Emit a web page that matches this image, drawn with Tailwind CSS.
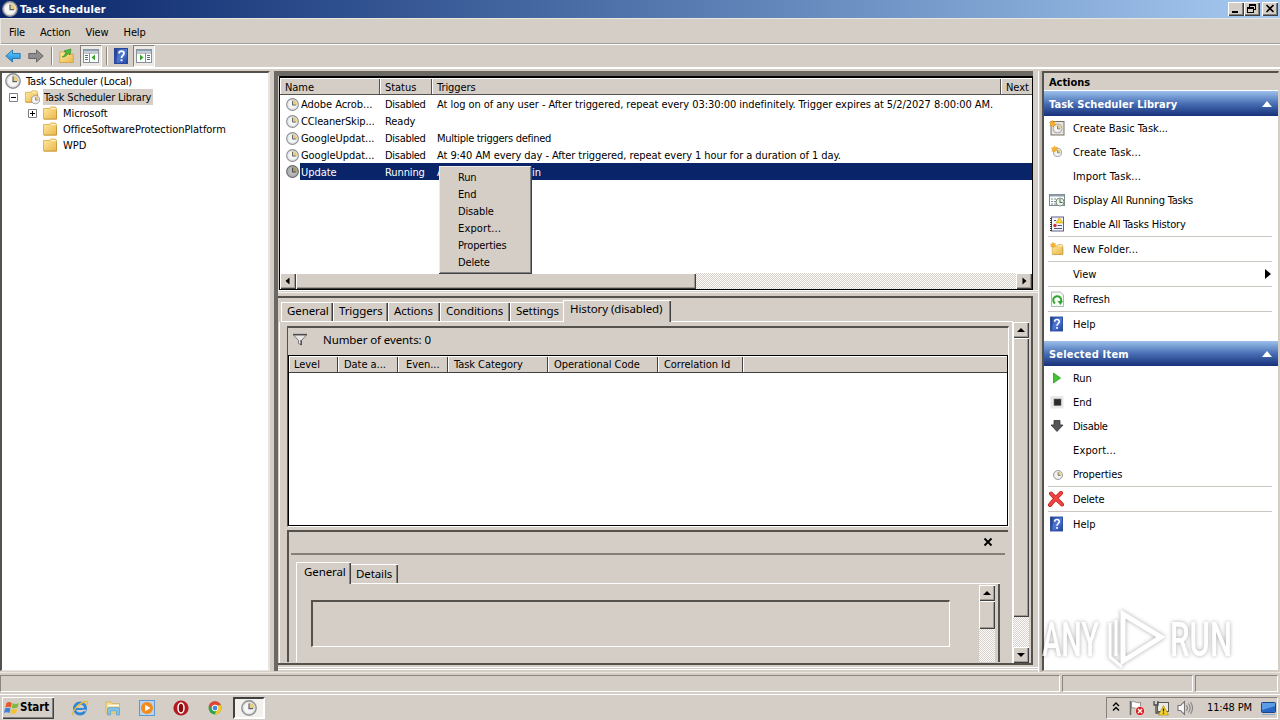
<!DOCTYPE html>
<html lang="en">

<head>
    <meta charset="UTF-8">
    <meta name="viewport" content="width=device-width, initial-scale=1.0">
    <title>Task Scheduler</title>
    <script src="https://cdn.jsdelivr.net/npm/@tailwindcss/browser@4"></script>
</head>

<body class="w-[1280px] h-[720px] overflow-hidden relative flex flex-col bg-[#d5cec7] text-black text-[11px] tracking-[-0.05px] font-['DejaVu_Sans_Condensed','DejaVu_Sans',sans-serif] whitespace-nowrap">

    <!-- icon set -->
    <svg width="0" height="0" class="absolute">
        <defs>
            <linearGradient id="gFolder" x1="0" y1="0" x2="1" y2="1">
                <stop offset="0" stop-color="#ffe9a0" />
                <stop offset="1" stop-color="#e9b84a" />
            </linearGradient>
            <linearGradient id="gBlue" x1="0" y1="0" x2="0" y2="1">
                <stop offset="0" stop-color="#6fd0fa" />
                <stop offset="1" stop-color="#1583d0" />
            </linearGradient>
            <linearGradient id="gHelp" x1="0" y1="0" x2="1" y2="1">
                <stop offset="0" stop-color="#2b4a9c" />
                <stop offset=".5" stop-color="#4f7ad6" />
                <stop offset="1" stop-color="#1f3f9b" />
            </linearGradient>
        </defs>
        <symbol id="clock" viewBox="0 0 16 16">
            <circle cx="8" cy="8" r="7.2" fill="#e9eaec" stroke="#8e8f92" stroke-width="1.400" />
            <circle cx="8" cy="8" r="5.600" fill="#f6f6f4" stroke="#cfd4da" stroke-width=".6" />
            <path d="M8 8.500V2.500A5.500 5.500 0 0 1 13.500 8.500z" fill="#e8cd80" />
            <path d="M8 3.500V8.700H12" fill="none" stroke="#5c6470" stroke-width="1.200" />
        </symbol>
        <symbol id="folder" viewBox="0 0 16 16">
            <path d="M1.500 3.500h6l1-1.500h5l1 1.500v10.500h-13z" fill="url(#gFolder)" stroke="#d9a842" stroke-width=".8" />
            <path d="M9 3.500h4.500" stroke="#fff6d0" stroke-width="1.200" />
            <path d="M2 14.200h12.500v-9" fill="none" stroke="#c48f30" stroke-width=".7" />
        </symbol>
        <symbol id="help" viewBox="0 0 14 16">
            <rect x=".5" y=".5" width="13" height="15" fill="url(#gHelp)" stroke="#29479a" />
            <path d="M2 1v14" stroke="#1c3580" />
            <path d="M5 5.500c0-3.200 5-3.200 5 0 0 2-2.500 2-2.500 4.500" fill="none" stroke="#fff" stroke-width="1.700" />
            <rect x="6.600" y="11.300" width="1.900" height="1.900" fill="#fff" />
        </symbol>
        <symbol id="arrow" viewBox="0 0 16 14">
            <path d="M.8 7L7.500 1v3.500h7.700v5H7.500V13z" />
        </symbol>
        <symbol id="star" viewBox="0 0 10 10">
            <path d="M5 0l1.200 3L9.500 2 8 5l2 2.500-3.200-.2L5.500 10 4 7.500 1 8.500 2.300 5.500 0 3.500l3.300-.3z" fill="#f7b02c" stroke="#dd8e15" stroke-width=".4" />
        </symbol>
    </svg>

    <!-- title bar -->
    <div class="h-[18px] shrink-0 flex items-center pl-[2px] pr-[2px] bg-linear-to-r from-[#0a246a] to-[#a6caf0] text-white">
        <svg class="size-4"><use href="#clock" /></svg>
        <span class="ml-[2px] pt-[2px] font-bold tracking-[0.15px]">Task Scheduler</span>
        <div class="ml-auto flex">
            <div class="w-4 h-[14px] bg-[#d5cec7] shadow-[inset_1px_1px_#fff,inset_-1px_-1px_#404040,inset_-2px_-2px_#808080]">
                <div class="w-[6px] h-[2px] bg-black translate-x-1 translate-y-[9px]"></div>
            </div>
            <div class="w-4 h-[14px] bg-[#d5cec7] shadow-[inset_1px_1px_#fff,inset_-1px_-1px_#404040,inset_-2px_-2px_#808080]">
                <svg class="w-4 h-[14px]" fill="none" stroke="#000" shape-rendering="crispEdges">
                    <path d="M5.500 5V2.500h6v5H10M5 3h7M3.500 5.500h6v5h-6zM3 6h7" />
                </svg>
            </div>
            <div class="ml-[2px] w-4 h-[14px] bg-[#d5cec7] shadow-[inset_1px_1px_#fff,inset_-1px_-1px_#404040,inset_-2px_-2px_#808080]">
                <svg class="w-4 h-[14px]" stroke="#000" stroke-width="1.600"><path d="M4.500 3l7 7M11.500 3l-7 7" /></svg>
            </div>
        </div>
    </div>

    <!-- menu bar -->
    <div class="h-[26px] shrink-0 flex items-center pl-[8px] pt-[4px] gap-[15px] tracking-[-0.1px] border-l border-t border-[#e9e5df] shadow-[inset_0_-1px_#a39e97]">
        <span>File</span><span>Action</span><span>View</span><span>Help</span>
    </div>

    <!-- tool bar -->
    <div class="h-[25px] shrink-0 flex items-center border-t border-white border-b-2 pl-[5px]">
        <svg class="w-4 h-[14px]" fill="url(#gBlue)" stroke="#1b78b8" stroke-width=".9"><use href="#arrow" /></svg>
        <svg class="w-4 h-[14px] ml-[7px] -scale-x-100" fill="#8e8e8e" stroke="#5c5c5c" stroke-width=".9"><use href="#arrow" /></svg>
        <div class="w-[2px] h-[18px] ml-[7px] border-l border-[#8a857e] bg-white"></div>
        <svg class="size-4 ml-[6px]">
            <path d="M.8 4h5l1 2h7.500v8.500H.8z" fill="url(#gFolder)" stroke="#d4a03c" stroke-width=".8" />
            <path d="M3 9c2-1 3.500-2.500 4-5L5 3l7-2-1 6-1.700-1.700C8 7.500 6 9 3 9z" fill="#4dbb35" stroke="#238a1e" stroke-width=".6" />
        </svg>
        <div class="ml-[5px] w-[22px] h-[22px] bg-[#ece9e5] border border-[#85807a] border-r-white border-b-white flex items-center justify-center">
            <svg class="w-4 h-[14px]">
                <rect x=".5" y=".5" width="15" height="13" fill="#fff" stroke="#87919c" />
                <path d="M1 1.500h14" stroke="#8ca0b5" stroke-width="2" />
                <path d="M1 4h14M6.500 4v9" stroke="#87919c" />
                <path d="M2 6.500h3M2 8.500h3M2 10.500h3" stroke="#4d6e93" />
                <path d="M12 5.500v6L8.500 8.500z" fill="#35a52a" />
            </svg>
        </div>
        <div class="w-[2px] h-[18px] ml-[4px] border-l border-[#8a857e] bg-white"></div>
        <svg class="w-[14px] h-4 ml-[6px]"><use href="#help" /></svg>
        <div class="ml-[5px] w-[22px] h-[22px] bg-[#ece9e5] border border-[#85807a] border-r-white border-b-white flex items-center justify-center">
            <svg class="w-4 h-[14px]">
                <rect x=".5" y=".5" width="15" height="13" fill="#fff" stroke="#87919c" />
                <path d="M1 1.500h14" stroke="#8ca0b5" stroke-width="2" />
                <path d="M1 4h14M9.500 4v9" stroke="#87919c" />
                <path d="M11 6.500h3M11 8.500h3M11 10.500h3" stroke="#4d6e93" />
                <path d="M4 5.500v6l3.500-3z" fill="#35a52a" />
            </svg>
        </div>
    </div>

    <!-- panes -->
    <div class="h-[603px] shrink-0 flex pt-[2px]">

        <!-- tree -->
        <div class="w-[270px] h-[600px] bg-white border-t-2 border-l-2 border-[#55514d] border-r-2 border-r-[#e8e5e0] border-b border-b-[#e8e5e0] [&_span]:pt-[2px]">
            <div class="flex items-center h-4 pl-[3px]">
                <svg class="size-4"><use href="#clock" /></svg>
                <span class="ml-[5px] tracking-[-0.2px]">Task Scheduler (Local)</span>
            </div>
            <div class="flex items-center h-4 pl-[7px]">
                <svg class="size-[9px]"><path d="M.5.5h8v8h-8z" fill="#fff" stroke="#808080" /><path d="M2 4.500h5" stroke="#000" /></svg>
                <svg class="size-4 ml-[6px]"><use href="#folder" width="15" height="15" /><use href="#clock" x="7" y="6" width="9" height="9.500" /></svg>
                <div class="ml-[3px] h-4 pl-px pr-[2px] leading-[17px] bg-[#d5cec7] tracking-[-0.2px]">Task Scheduler Library</div>
            </div>
            <div class="flex items-center h-4 pl-[26px]">
                <svg class="size-[9px]"><path d="M.5.5h8v8h-8z" fill="#fff" stroke="#808080" /><path d="M2 4.500h5M4.500 2v5" stroke="#000" /></svg>
                <svg class="size-4 ml-[5px]"><use href="#folder" /></svg>
                <span class="ml-[5px]">Microsoft</span>
            </div>
            <div class="flex items-center h-4 pl-[40px]">
                <svg class="size-4"><use href="#folder" /></svg>
                <span class="ml-[5px]">OfficeSoftwareProtectionPlatform</span>
            </div>
            <div class="flex items-center h-4 pl-[40px]">
                <svg class="size-4"><use href="#folder" /></svg>
                <span class="ml-[5px]">WPD</span>
            </div>
        </div>

        <!-- middle column -->
        <div class="ml-[4px] w-[764px] h-[600px] flex flex-col border-l-[4px] border-[#6c6863]">

            <!-- task list -->
            <div class="h-[219px] w-[755px] border-t-[5px] border-[#6c6863] pl-px">
                <div class="h-[214px] border border-black border-t-2 border-r-[1.500px] bg-white flex flex-col overflow-hidden [&_span]:pt-[2px]">
                    <div class="h-[17px] shrink-0 flex bg-[#d5cec7] leading-[19px] border-b border-[#55514d]">
                        <div class="w-[100px] pl-[5px] shadow-[inset_1px_1px_#fff,inset_-1px_0_#55514d]">Name</div>
                        <div class="w-[52px] pl-[5px] shadow-[inset_1px_1px_#fff,inset_-1px_0_#55514d]">Status</div>
                        <div class="w-[569px] pl-[5px] shadow-[inset_1px_1px_#fff,inset_-1px_0_#55514d]">Triggers</div>
                        <div class="grow pl-[5px] shadow-[inset_1px_1px_#fff]">Next</div>
                    </div>
                    <div class="h-[17px] shrink-0 flex items-center pl-[6px] pt-px">
                        <svg class="size-[13px]"><use href="#clock" /></svg>
                        <span class="ml-[2px] w-[84px]">Adobe Acrob...</span><span class="w-[52px] tracking-[-0.3px]">Disabled</span>
                        <span>At log on of any user - After triggered, repeat every 03:30:00 indefinitely. Trigger expires at 5/2/2027 8:00:00 AM.</span>
                    </div>
                    <div class="h-[17px] shrink-0 flex items-center pl-[6px] pt-px">
                        <svg class="size-[13px]"><use href="#clock" /></svg>
                        <span class="ml-[2px] w-[84px] tracking-[-0.15px]">CCleanerSkip...</span><span class="w-[52px]">Ready</span>
                    </div>
                    <div class="h-[17px] shrink-0 flex items-center pl-[6px] pt-px">
                        <svg class="size-[13px]"><use href="#clock" /></svg>
                        <span class="ml-[2px] w-[84px]">GoogleUpdat...</span><span class="w-[52px] tracking-[-0.3px]">Disabled</span>
                        <span class="tracking-[-0.3px]">Multiple triggers defined</span>
                    </div>
                    <div class="h-[17px] shrink-0 flex items-center pl-[6px] pt-px">
                        <svg class="size-[13px]"><use href="#clock" /></svg>
                        <span class="ml-[2px] w-[84px]">GoogleUpdat...</span><span class="w-[52px] tracking-[-0.3px]">Disabled</span>
                        <span class="tracking-[-0.07px]">At 9:40 AM every day - After triggered, repeat every 1 hour for a duration of 1 day.</span>
                    </div>
                    <div class="h-[17px] shrink-0 flex items-center pl-[6px]">
                        <svg class="size-[13px] brightness-75"><use href="#clock" /></svg>
                        <div class="ml-px pl-px pt-px grow h-[17px] flex items-center bg-[#0a246a] text-white">
                            <span class="w-[84px]">Update</span><span class="w-[52px] tracking-[-0.1px]">Running</span>
                            <span class="w-[104px] flex justify-between"><b class="font-normal">At log on of</b><b class="font-normal">admin</b></span>
                        </div>
                    </div>
                    <div class="mt-auto h-4 shrink-0 flex bg-[repeating-conic-gradient(#fff_0_25%,#d5cec7_0_50%)] bg-[length:2px_2px]">
                        <div class="w-4 bg-[#d5cec7] shadow-[inset_1px_1px_#fff,inset_-1px_-1px_#404040,inset_-2px_-2px_#a09a93]">
                            <svg class="size-4"><path d="M9.500 4.500v7L5.500 8z" /></svg>
                        </div>
                        <div class="w-[400px] bg-[#d5cec7] shadow-[inset_1px_1px_#fff,inset_-1px_-1px_#404040,inset_-2px_-2px_#a09a93]"></div>
                        <div class="ml-auto w-4 bg-[#d5cec7] shadow-[inset_1px_1px_#fff,inset_-1px_-1px_#404040,inset_-2px_-2px_#a09a93]">
                            <svg class="size-4"><path d="M6.500 4.500v7l4-3.500z" /></svg>
                        </div>
                    </div>
                </div>
            </div>

            <!-- task details -->
            <div class="h-[2px] border-t border-white"></div>
            <div class="h-[2px] border-t border-[#f4f2ef]"></div>
            <div class="mt-[2px] w-[755px] h-[369px] border-t-2 border-r-2 border-b-2 border-[#55514d] pl-px flex">
                <div class="w-[734px] flex flex-col pt-[2px] font-['Noto_Sans','Open_Sans',sans-serif] text-[11.5px] tracking-[-0.1px]">
                    <div class="h-[22px] pl-[2px] flex items-end leading-[16px]">
                        <div class="w-[52px] h-5 pl-[5px] border-t border-l border-b border-white shadow-[inset_-1px_0_#404040,inset_-2px_0_#8a857e]">General</div>
                        <div class="w-[55px] h-5 pl-[5px] border-t border-l border-b border-white shadow-[inset_-1px_0_#404040,inset_-2px_0_#8a857e]">Triggers</div>
                        <div class="w-[52px] h-5 pl-[5px] border-t border-l border-b border-white shadow-[inset_-1px_0_#404040,inset_-2px_0_#8a857e]">Actions</div>
                        <div class="w-[70px] h-5 pl-[5px] border-t border-l border-b border-white shadow-[inset_-1px_0_#404040,inset_-2px_0_#8a857e]">Conditions</div>
                        <div class="w-[53px] h-5 pl-[5px] border-t border-l border-b border-white">Settings</div>
                        <div class="w-[108px] h-[22px] pl-[6px] border-t border-l border-white shadow-[inset_-1px_0_#404040,inset_-2px_0_#8a857e]">History (disabled)</div>
                        <div class="w-[342px] h-px bg-white"></div>
                    </div>
                    <div class="h-[341px] border-l border-r border-white pl-[7px] pt-[4px] flex flex-col">
                        <!-- events -->
                        <div class="w-[722px] h-[201px] border-l border-t-2 border-[#55514d] border-r border-r-white border-b border-b-white">
                            <div class="h-[27px] flex items-center pl-[4px]">
                                <svg class="size-4 -mt-1"><path d="M1.500 3h13L9.500 8.500V13l-3-1.500v-3z" fill="#e6e6e4" stroke="#77777a" /><path d="M1 2.500h14" stroke="#4c4c4c" stroke-width="1.300" /><path d="M9 8v5" stroke="#333" /></svg>
                                <span class="ml-[15px] -mt-[3px]">Number of events: 0</span>
                            </div>
                            <div class="h-[171px] w-[720px] border border-black bg-white text-[11px] tracking-[-0.05px] font-['DejaVu_Sans_Condensed','DejaVu_Sans',sans-serif]">
                                <div class="h-[17px] flex bg-[#d5cec7] leading-[18px] border-b border-[#404040]">
                                    <div class="w-[49px] pl-[5px] shadow-[inset_1px_1px_#fff,inset_-1px_0_#404040]">Level</div>
                                    <div class="w-[60px] pl-[6px] shadow-[inset_1px_1px_#fff,inset_-1px_0_#404040]">Date a...</div>
                                    <div class="w-[50px] pl-[8px] shadow-[inset_1px_1px_#fff,inset_-1px_0_#404040]">Even...</div>
                                    <div class="w-[100px] pl-[6px] shadow-[inset_1px_1px_#fff,inset_-1px_0_#404040]">Task Category</div>
                                    <div class="w-[110px] pl-[6px] shadow-[inset_1px_1px_#fff,inset_-1px_0_#404040]">Operational Code</div>
                                    <div class="w-[85px] pl-[6px] shadow-[inset_1px_1px_#fff,inset_-1px_0_#404040]">Correlation Id</div>
                                    <div class="grow shadow-[inset_1px_1px_#fff]"></div>
                                </div>
                            </div>
                        </div>
                        <!-- event preview -->
                        <div class="mt-[3px] w-[721px] h-[132px] border-l-2 border-t-2 border-[#55514d] flex flex-col">
                            <div class="ml-[2px] w-[714px] h-[23px] border-b-2 border-[#85807a] flex items-center">
                                <svg class="size-[10px] ml-[692px] -mt-px" stroke="#000" stroke-width="1.800"><path d="M1.500 1.500l7 7M8.500 1.500l-7 7" /></svg>
                            </div>
                            <div class="mt-[7px] ml-[7px] w-[704px] flex items-end h-[22px] leading-[18px]">
                                <div class="w-[55px] h-[22px] pl-[7px] border-l border-t border-white shadow-[inset_-1px_0_#404040,inset_-2px_0_#8a857e]">General</div>
                                <div class="w-[47px] h-5 pl-[5px] border-t border-b border-white shadow-[inset_-1px_0_#404040,inset_-2px_0_#8a857e]">Details</div>
                                <div class="grow h-px bg-white"></div>
                            </div>
                            <div class="ml-[7px] w-[704px] grow border-l border-l-white border-r-2 border-r-[#55514d] flex">
                                <div class="mt-[16px] ml-[14px] w-[639px] h-[47px] border-l-2 border-t-2 border-[#55514d] border-r border-r-white border-b border-b-white"></div>
                                <div class="ml-auto mr-[3px] mt-px w-4 bg-[repeating-conic-gradient(#fff_0_25%,#d5cec7_0_50%)] bg-[length:2px_2px]">
                                    <div class="size-4 bg-[#d5cec7] shadow-[inset_1px_1px_#fff,inset_-1px_-1px_#404040,inset_-2px_-2px_#a09a93]">
                                        <svg class="size-4"><path d="M4 10h8L8 6z" /></svg>
                                    </div>
                                    <div class="h-[28px] bg-[#d5cec7] shadow-[inset_1px_1px_#fff,inset_-1px_-1px_#404040,inset_-2px_-2px_#a09a93]"></div>
                                </div>
                            </div>
                        </div>
                    </div>
                </div>
                <!-- vertical scroll bar -->
                <div class="mt-[24px] w-4 h-[341px] bg-[repeating-conic-gradient(#fff_0_25%,#d5cec7_0_50%)] bg-[length:2px_2px] flex flex-col">
                    <div class="h-4 bg-[#d5cec7] shadow-[inset_1px_1px_#fff,inset_-1px_-1px_#404040,inset_-2px_-2px_#a09a93]">
                        <svg class="size-4"><path d="M4 10h8L8 6z" /></svg>
                    </div>
                    <div class="h-[279px] bg-[#d5cec7] shadow-[inset_1px_1px_#fff,inset_-1px_-1px_#404040,inset_-2px_-2px_#a09a93]"></div>
                    <div class="mt-auto h-4 bg-[#d5cec7] shadow-[inset_1px_1px_#fff,inset_-1px_-1px_#404040,inset_-2px_-2px_#a09a93]">
                        <svg class="size-4"><path d="M4 6h8l-4 4z" /></svg>
                    </div>
                </div>
            </div>
            <div class="mt-[2px] h-[2px] border-t border-white"></div>
            <div class="h-[2px] border-t border-white"></div>
        </div>

        <!-- actions pane -->
        <div class="w-[4px] bg-[#d5cec7] border-r-2 border-[#bdb8b1] shadow-[inset_1px_0_#fff]"></div>
        <div class="w-[237px] h-[600px] bg-white border-l-2 border-t-2 border-[#55514d] border-r border-r-[#d5cec7] border-b border-b-[#d5cec7] [&_span]:pt-[2px]">
            <div class="h-[18px] pl-[5px] leading-[19px] bg-[#d5cec7] border-b border-white font-bold">Actions</div>
            <div class="h-[25px] pl-[5px] pr-[6px] flex items-center justify-between bg-linear-to-b from-[#9cc0ea] via-[#4a6fb5] to-[#17317b] text-white font-bold tracking-[0.06px]">
                <span class="mt-[2px]">Task Scheduler Library</span>
                <svg class="w-[10px] h-[6px]" fill="#fff"><path d="M0 6L5 0l5 6z" /></svg>
            </div>
            <div class="h-6 flex items-center pl-[5px]">
                <svg class="size-4"><rect x="2" y="1.500" width="13" height="13.500" fill="#e9e4da" stroke="#77716a" /><use href="#clock" x="3.500" y="3.500" width="10" height="10" /><use href="#star" width="7" height="7" /></svg>
                <span class="ml-[8px]">Create Basic Task...</span>
            </div>
            <div class="h-6 flex items-center pl-[5px]">
                <svg class="size-4"><use href="#clock" x="4" y="4" width="9" height="9" /><use href="#star" x="2" y="1.500" width="7" height="7" /></svg>
                <span class="ml-[8px] tracking-[0.1px]">Create Task...</span>
            </div>
            <div class="h-6 flex items-center pl-[29px]"><span class="tracking-[0.1px]">Import Task...</span></div>
            <div class="h-6 flex items-center pl-[5px]">
                <svg class="size-4"><rect x=".5" y="2.500" width="15" height="11" fill="#fff" stroke="#7c8a90" /><path d="M1 3.500h14" stroke="#8e9da8" stroke-width="2" /><path d="M2 7h5M2 9.500h5M2 12h5" stroke="#6c8a8c" stroke-dasharray="2 1" /><circle cx="11" cy="10" r="4" fill="#eef4ea" stroke="#7c8a80" /><path d="M11 7v3.500h2.500" fill="none" stroke="#3a6a50" /></svg>
                <span class="ml-[8px] tracking-[-0.2px]">Display All Running Tasks</span>
            </div>
            <div class="h-6 flex items-center pl-[5px]">
                <svg class="size-4"><rect x="2.500" y="1" width="12" height="14" fill="#f4f4fa" stroke="#5d6288" /><path d="M2 2v13" stroke="#333" stroke-width="2" stroke-dasharray="1 1" /><path d="M10.500 1.500L14 7H7z" fill="#f9d62c" stroke="#c9a010" stroke-width=".6" /><circle cx="6" cy="9.500" r="1.700" fill="#d03030" /><path d="M8.500 9.500H13M5 12.500h8M5 4.500h2" stroke="#50558a" /></svg>
                <span class="ml-[8px] tracking-[-0.18px]">Enable All Tasks History</span>
            </div>
            <div class="ml-[4px] w-[224px] h-px bg-[#cac6bf]"></div>
            <div class="h-6 flex items-center pl-[5px]">
                <svg class="size-4"><use href="#folder" x="1" y="2" width="15" height="13" /><use href="#star" x="1" y="1" width="6" height="6" /></svg>
                <span class="ml-[8px] tracking-[0.12px]">New Folder...</span>
            </div>
            <div class="ml-[4px] w-[224px] h-px bg-[#cac6bf]"></div>
            <div class="h-6 flex items-center justify-between pl-[29px] pr-[7px]">
                <span>View</span>
                <svg class="w-[6px] h-[10px]"><path d="M0 0l6 5-6 5z" /></svg>
            </div>
            <div class="ml-[4px] w-[224px] h-px bg-[#cac6bf]"></div>
            <div class="h-6 flex items-center pl-[5px]">
                <svg class="size-4"><path d="M2.500 1h9l3 3v11.500h-12z" fill="#f6fbf4" stroke="#9aa69a" stroke-width=".8" /><path d="M6 12.500A4 4 0 1 1 11.500 11.500" fill="none" stroke="#36a536" stroke-width="2" /><path d="M8.500 10h5.500l-2.500 4z" fill="#36a536" /></svg>
                <span class="ml-[8px]">Refresh</span>
            </div>
            <div class="ml-[4px] w-[224px] h-px bg-[#cac6bf]"></div>
            <div class="h-6 flex items-center pl-[6px]">
                <svg class="w-[13px] h-4"><use href="#help" /></svg>
                <span class="ml-[10px]">Help</span>
            </div>
            <div class="mt-[5px] h-[25px] pl-[5px] pr-[6px] flex items-center justify-between bg-linear-to-b from-[#9cc0ea] via-[#4a6fb5] to-[#17317b] text-white font-bold tracking-[0.2px]">
                <span class="mt-[2px]">Selected Item</span>
                <svg class="w-[10px] h-[6px]" fill="#fff"><path d="M0 6L5 0l5 6z" /></svg>
            </div>
            <div class="h-6 flex items-center pl-[5px]">
                <svg class="size-4"><path d="M4.500 3v10l7-5z" fill="#45c433" stroke="#2c9a20" stroke-width=".8" /></svg>
                <span class="ml-[8px]">Run</span>
            </div>
            <div class="h-6 flex items-center pl-[5px]">
                <svg class="size-4"><rect x="1.500" y="2" width="13" height="12.500" fill="#e9e9e9" /><rect x="5" y="5" width="7" height="6.500" fill="#2b2b2f" stroke="#6a6a6a" stroke-width=".6" /></svg>
                <span class="ml-[8px]">End</span>
            </div>
            <div class="h-6 flex items-center pl-[5px]">
                <svg class="size-4"><path d="M5 2.500h6v4.500h3L8 13.500 2 7h3z" fill="#56565a" stroke="#333" stroke-width=".8" /></svg>
                <span class="ml-[8px] tracking-[-0.3px]">Disable</span>
            </div>
            <div class="h-6 flex items-center pl-[29px]"><span class="tracking-[0.15px]">Export...</span></div>
            <div class="h-6 flex items-center pl-[5px]">
                <svg class="size-4"><use href="#clock" x="4" y="4" width="10" height="10" /></svg>
                <span class="ml-[8px]">Properties</span>
            </div>
            <div class="ml-[4px] w-[224px] h-px bg-[#cac6bf]"></div>
            <div class="h-6 flex items-center pl-[4px]">
                <svg class="size-4"><path d="M3 2.500C5 5 11 10 14 13.500M13 2C10 5 5 10 2 14" fill="none" stroke="#c41c1c" stroke-width="4" stroke-linecap="round" /><path d="M3 2.500C5 5 11 10 14 13.500M13 2C10 5 5 10 2 14" fill="none" stroke="#ee4545" stroke-width="2.600" stroke-linecap="round" /></svg>
                <span class="ml-[9px] tracking-[-0.2px]">Delete</span>
            </div>
            <div class="ml-[4px] w-[224px] h-px bg-[#cac6bf]"></div>
            <div class="h-6 flex items-center pl-[6px]">
                <svg class="w-[13px] h-4"><use href="#help" /></svg>
                <span class="ml-[10px]">Help</span>
            </div>
        </div>
    </div>

    <!-- status bar -->
    <div class="h-[21px] shrink-0 flex gap-[2px] pt-[2px] pb-[1px] pr-[2px] border-t border-[#ebe8e3]">
        <div class="w-[1060px] border border-[#8a857e] border-r-white border-b-white"></div>
        <div class="w-[131px] border border-[#8a857e] border-r-white border-b-white"></div>
        <div class="grow border border-[#8a857e] border-r-white border-b-white"></div>
    </div>

    <!-- task bar -->
    <div class="h-[27px] shrink-0 flex items-center border-t border-white mt-px pl-[2px] pr-[2px]">
        <div class="w-[52px] h-[22px] flex items-center pl-[2px] shadow-[inset_1px_1px_#fff,inset_-1px_-1px_#404040,inset_-2px_-2px_#808080]">
            <svg class="size-4">
                <path d="M2.500 3C4.500 1.500 6 2 7.800 3L6.800 7.500C5 6.500 3.500 6.500 1.300 7.500z" fill="#e8582a" />
                <path d="M8.800 3.300c2 1 4 .8 6-.3L13.500 7.500c-2 1-4 1-5.700.2z" fill="#7cbb3c" />
                <path d="M1 8.500c2-1 3.700-1 5.500 0L5.500 13c-2-1-3.700-1-5.500 0z" fill="#3d84d8" />
                <path d="M7.500 8.800c2 1 4 .8 5.800-.2L12 13c-2 1-4 1-5.700.2z" fill="#f4c22d" />
            </svg>
            <span class="text-[11.5px] font-bold">Start</span>
        </div>
        <svg class="w-[18px] h-4 ml-[17px]" fill="none">
            <circle cx="9" cy="8.500" r="5.500" stroke="#2d86d8" stroke-width="3" />
            <path d="M4 9h10" stroke="#2d86d8" stroke-width="2" /><path d="M11 10.500h4" stroke="#d5cec7" stroke-width="1.600" />
            <path d="M3 14.500C-1 15 5 5 13 2c4-1.500 4.500 0 2.500 3" stroke="#e6b93a" stroke-width="1.500" />
        </svg>
        <svg class="size-4 ml-[16px]">
            <path d="M1 2h5l1 1.500h7.500V13H1z" fill="#f5dc88" stroke="#cfae55" stroke-width=".7" />
            <path d="M3 5.500h11" stroke="#fff" stroke-width="1.500" />
            <path d="M2.500 15V9q0-1.500 1.500-1.500h9q1.500 0 1.500 1.500v6h-3v-4h-6v4z" fill="#7ec2e8" stroke="#5499c4" stroke-width=".6" />
        </svg>
        <svg class="size-4 ml-[18px]">
            <rect x=".5" y=".5" width="15" height="15" fill="#b8d4ee" stroke="#5d98d0" />
            <circle cx="8" cy="8" r="6" fill="#f28a1c" /><path d="M6.200 4.800v6.400L11.500 8z" fill="#fff" />
        </svg>
        <svg class="size-4 ml-[18px]">
            <circle cx="8" cy="8" r="7.600" fill="#b51a1e" /><ellipse cx="8" cy="8" rx="3" ry="5" fill="#8a0c10" stroke="#fff" stroke-width="1.500" />
        </svg>
        <svg class="size-[14px] ml-[19px]" viewBox="0 0 14 14">
            <circle cx="7" cy="7" r="6.500" fill="#2fa24c" />
            <path d="M1 4.200A6.500 6.500 0 0 1 13 4.300H7L4 8z" fill="#e04434" />
            <path d="M13 4.300A6.500 6.500 0 0 1 6.500 13.500L10 7.500 8 4.300z" fill="#f6c62c" />
            <circle cx="7" cy="7" r="2.900" fill="#4387e4" stroke="#fff" stroke-width="1" />
        </svg>
        <div class="ml-[11px] w-[32px] h-[22px] bg-[#f3f1ee] border-2 border-[#404040] border-r-white border-b-white flex items-center justify-center">
            <svg class="size-4"><use href="#clock" /></svg>
        </div>

        <!-- tray -->
        <div class="ml-auto w-[172px] h-[22px] flex items-center border border-[#85807a] border-r-white border-b-white">
            <svg class="w-2 h-[10px] ml-[5px] -mt-[3px]" fill="none" stroke="#000" stroke-width="1.400"><path d="M1 4l3-3 3 3M1 8.500l3-3 3 3" /></svg>
            <svg class="size-4 ml-[9px]">
                <path d="M1.500 1v14" stroke="#6a6a6a" stroke-width="1.500" /><path d="M2.500 2c3-1.500 4 1.500 9 .5v6c-4 1-6-1.500-9-.5z" fill="#fff" stroke="#777" stroke-width=".8" />
                <circle cx="11" cy="11" r="4.600" fill="#d62424" stroke="#fff" stroke-width=".6" /><path d="M9 9l4 4M13 9l-4 4" stroke="#fff" stroke-width="1.400" />
            </svg>
            <svg class="size-4 ml-[8px]">
                <rect x="4.500" y="2.500" width="11" height="9" fill="#eceae5" stroke="#55585a" /><path d="M1 1v4h4V1M3 5v8h4" fill="none" stroke="#4c4c4c" stroke-width="1.300" />
                <path d="M10.500 5.500L15.500 15h-10z" fill="#f8d52b" stroke="#b48e12" stroke-width=".7" /><path d="M10.500 8.500v3M10.500 12.500v1.300" stroke="#222" stroke-width="1.300" />
            </svg>
            <svg class="size-4 ml-[8px]" fill="none" stroke="#77777a">
                <path d="M1 5.500h2.500L7.500 1.500v13l-4-4H1z" fill="#fafafa" stroke-width="1.100" /><path d="M9.500 5q2 3 0 6M11.500 3.500q3.300 4.500 0 9M13.500 2q4 6 0 12" />
            </svg>
            <span class="ml-[14px] w-[46px] tracking-[-0.15px]">11:48 PM</span>
            <svg class="w-[15px] h-[14px] ml-[8px]"><rect x=".5" y="1.500" width="14" height="10" rx="1" fill="#2867c4" stroke="#1c458c" /><path d="M1 2h13v3L1 9z" fill="#5c9be6" /><path d="M1 13.500h13" stroke="#8fa9c9" /></svg>
        </div>
    </div>

    <!-- context menu -->
    <div class="absolute left-[439px] top-[166px] w-[93px] h-[108px] pt-[3px] pl-[19px] leading-[17px] tracking-[-0.15px] bg-[#d5cec7] shadow-[inset_-1px_-1px_#404040,inset_1px_1px_#efece8,inset_-2px_-2px_#808080]">
        <div>Run</div>
        <div>End</div>
        <div>Disable</div>
        <div class="tracking-[0.15px]">Export...</div>
        <div>Properties</div>
        <div>Delete</div>
    </div>

    <!-- watermark -->
    <svg class="absolute left-[1036px] top-[604px] w-[230px] h-[76px] drop-shadow-[0_0_2px_rgba(0,0,0,0.45)] opacity-75" fill="#fff">
        <text x="6" y="52" font-family="Roboto, sans-serif" font-weight="500" font-size="48" letter-spacing="0" textLength="57" lengthAdjust="spacingAndGlyphs">ANY</text>
        <text x="134" y="52" font-family="Roboto, sans-serif" font-weight="500" font-size="48" letter-spacing="0" textLength="62" lengthAdjust="spacingAndGlyphs">RUN</text>
        <path d="M87 10l38 23-38 24z" fill="none" stroke="#fff" stroke-width="5" />
        <path d="M80 16v36M74 19v34l12 10" fill="none" stroke="#fff" stroke-width="3" />
    </svg>
</body>

</html>
